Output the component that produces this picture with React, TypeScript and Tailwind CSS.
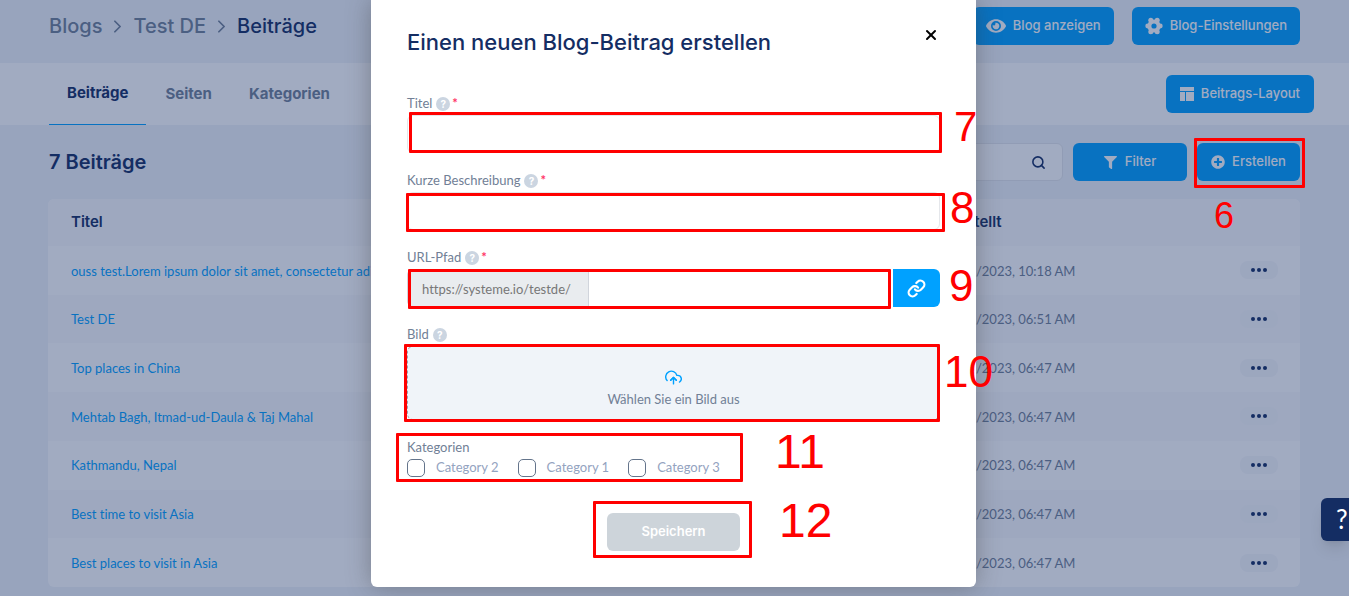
import React from "react";
import { FaEye, FaFilter, FaPlusCircle } from "react-icons/fa";
import { FiSearch, FiUploadCloud } from "react-icons/fi";
import { ChevronRight, Link, X } from "lucide-react";

const posts = [
  { title: "ouss test.Lorem ipsum dolor sit amet, consectetur adipiscing", date: "4/1/2023, 10:18 AM" },
  { title: "Test DE", date: "3/2/2023, 06:51 AM" },
  { title: "Top places in China", date: "3/2/2023, 06:47 AM" },
  { title: "Mehtab Bagh, Itmad-ud-Daula & Taj Mahal", date: "3/2/2023, 06:47 AM" },
  { title: "Kathmandu, Nepal", date: "3/2/2023, 06:47 AM" },
  { title: "Best time to visit Asia", date: "3/2/2023, 06:47 AM" },
  { title: "Best places to visit in Asia", date: "3/2/2023, 06:47 AM" },
];

const categories = ["Category 2", "Category 1", "Category 3"];

// red frames and step numbers, placed from the top left of the dialog
const marks = [
  { box: "left-[38px] top-[112px] w-[533px] h-[41px]", num: "7", pos: "left-[583px] top-[106px] text-[42px]" },
  { box: "left-[35px] top-[193px] w-[539px] h-[39px]", num: "8", pos: "left-[579px] top-[186px] text-[44px]" },
  { box: "left-[37px] top-[269px] w-[483px] h-[40px]", num: "9", pos: "left-[578px] top-[264px] text-[44px]" },
  { box: "left-[33px] top-[344px] w-[536px] h-[78px]", num: "10", pos: "left-[573px] top-[350px] text-[44px]" },
  { box: "left-[25px] top-[433px] w-[347px] h-[49px]", num: "11", pos: "left-[404px] top-[428px] text-[48px]" },
  { box: "left-[222px] top-[501px] w-[159px] h-[57px]", num: "12", pos: "left-[408px] top-[497px] text-[48px]" },
];

const blueButton =
  "flex h-[38px] items-center justify-center rounded-md bg-[#00a1ff] text-[13px] font-medium text-white font-['Inter',sans-serif]";

function GearIcon() {
  return (
    <svg viewBox="0 0 18 18" className="h-[18px] w-[18px]" fill="currentColor">
      <circle cx="9" cy="9" r="4.6" fill="none" stroke="currentColor" strokeWidth="4" />
      <circle cx="2.7" cy="9" r="2.4" />
      <circle cx="15.3" cy="9" r="2.4" />
      <circle cx="5.8" cy="3.3" r="2.5" />
      <circle cx="12.2" cy="3.3" r="2.5" />
      <circle cx="5.8" cy="14.7" r="2.5" />
      <circle cx="12.2" cy="14.7" r="2.5" />
    </svg>
  );
}

function LayoutIcon() {
  return (
    <svg viewBox="0 0 14 14" className="h-3.5 w-3.5" fill="currentColor">
      <path d="M0 0h14v4H0zM0 5h5v9H0zM6 5h8v9H6z" />
    </svg>
  );
}

function Help() {
  return (
    <span className="flex h-3.5 w-3.5 items-center justify-center rounded-full bg-[#cbd5e1] text-[10px] leading-none font-bold text-white font-['Inter',sans-serif]">
      ?
    </span>
  );
}

function Label({ id, text, required }: { id: string; text: string; required?: boolean }) {
  return (
    <div className="flex h-[22px] items-center">
      <label htmlFor={id} className="mr-1">{text}</label>
      <Help />
      {required && <span className="ml-0.5 font-bold text-[#ff3366]">*</span>}
    </div>
  );
}

function Dialog() {
  return (
    <div
      role="dialog"
      aria-labelledby="dialog-title"
      className="relative w-[605px] rounded-b-md bg-white px-9 pb-9 shadow-[0_0_24px_rgba(60,60,60,0.4)]"
    >
      <div className="flex h-[92px] items-start justify-between">
        <h2 id="dialog-title" className="pt-[26px] text-[22px] leading-8 font-medium text-[#142d63] font-['Inter',sans-serif]">
          Einen neuen Blog-Beitrag erstellen
        </h2>
        <button aria-label="Schließen" className="mt-7 flex h-3.5 w-[18px] items-center justify-center text-black">
          <X size={16} strokeWidth={3} />
        </button>
      </div>

      <form className="flex flex-col gap-[17px] pt-px text-[#718096]">
        <div>
          <Label id="titel" text="Titel" required />
          <input id="titel" className="block h-[38px] w-full rounded-md border border-gray-200 px-3" />
        </div>
        <div>
          <Label id="beschreibung" text="Kurze Beschreibung" required />
          <input id="beschreibung" className="block h-[38px] w-full rounded-md border border-gray-200 px-3" />
        </div>
        <div>
          <Label id="pfad" text="URL-Pfad" required />
          <div className="flex h-[38px]">
            <span className="flex w-[182px] items-center rounded-l-md border border-gray-300 bg-[#e9ecef] px-3.5 pt-1 text-[#777]">
              https://systeme.io/testde/
            </span>
            <input id="pfad" className="min-w-0 flex-1 border-y border-gray-200 px-3" />
            <button type="button" aria-label="Link kopieren" className="ml-0.5 flex w-[47px] items-center justify-center rounded-r-md bg-[#00a1ff] text-white">
              <Link size={19} strokeWidth={2.75} />
            </button>
          </div>
        </div>
        <div>
          <Label id="bild" text="Bild" />
          <button
            id="bild"
            type="button"
            className="flex h-[74px] w-full flex-col items-center justify-center gap-1 rounded-md border border-dashed border-gray-400 bg-[#f0f4f9] pt-3"
          >
            <FiUploadCloud size={17} className="text-[#00a1ff]" />
            <span>Wählen Sie ein Bild aus</span>
          </button>
        </div>
        <fieldset>
          <legend className="mb-0.5 h-5 leading-5">Kategorien</legend>
          <div className="flex h-[18px] items-center gap-[19px] text-[#94a3bf]">
            {categories.map((name) => (
              <label key={name} className="flex items-center gap-[11px]">
                <input type="checkbox" className="h-[18px] w-[18px] appearance-none rounded-[5px] border border-[#64748b]" />
                {name}
              </label>
            ))}
          </div>
        </fieldset>
        <button
          type="submit"
          className="mt-[19px] h-[38px] w-[133px] self-center rounded-md bg-[#cdd4da] font-semibold text-white font-['Inter',sans-serif]"
        >
          Speichern
        </button>
      </form>

      {marks.map((m) => (
        <div key={m.num} className="pointer-events-none text-[#ff0000] font-['Liberation_Sans',sans-serif]">
          <div className={`absolute rounded-[1px] border-3 border-[#ff0000] ${m.box}`} />
          <span className={`absolute leading-none ${m.pos}`}>{m.num}</span>
        </div>
      ))}
    </div>
  );
}

export default function App() {
  return (
    <div className="relative min-h-screen overflow-hidden bg-[#f0f4f9] text-[13px] font-['Lato',sans-serif] [font-variant-ligatures:none]">
      <header className="flex h-[63px] items-start justify-between px-[49px] pt-[7px] font-['Inter',sans-serif]">
        <nav className="flex h-[38px] items-center gap-[5px] text-xl font-medium text-[#718096]">
          <a href="#">Blogs</a>
          <ChevronRight size={21} />
          <a href="#">Test DE</a>
          <ChevronRight size={21} />
          <span className="text-[#142d63]">Beiträge</span>
        </nav>
        <div className="flex gap-[18px]">
          <button className={`${blueButton} gap-[7px] px-[13px]`}><FaEye size={20} />Blog anzeigen</button>
          <button className={`${blueButton} gap-[7px] px-[13px]`}><GearIcon />Blog-Einstellungen</button>
        </div>
      </header>

      <div className="flex h-[62px] items-center justify-between bg-white pr-[35px] pl-[49px]">
        <nav className="flex h-full gap-px text-[15px] font-bold text-[#718096] font-['Inter',sans-serif]">
          <a href="#" className="flex items-center border-b border-[#00a1ff] px-[18px] text-[#142d63]">Beiträge</a>
          <a href="#" className="flex items-center px-[18px]">Seiten</a>
          <a href="#" className="flex items-center px-[18px]">Kategorien</a>
        </nav>
        <button className={`${blueButton} gap-[7px] px-3.5`}><LayoutIcon />Beitrags-Layout</button>
      </div>

      <main className="pt-[18px] pr-[49px] pl-12">
        <div className="flex items-center justify-between">
          <h1 className="pl-px text-xl font-semibold text-[#142d63] font-['Inter',sans-serif]">7 Beiträge</h1>
          <div className="flex gap-2.5">
            <div className="flex h-[38px] w-60 items-center rounded-md border border-gray-200 bg-white pr-4">
              <input aria-label="Suche" className="min-w-0 flex-1 px-3" />
              <FiSearch size={15} strokeWidth={2.5} className="text-[#142d63]" />
            </div>
            <button className={`${blueButton} w-[114px] gap-2`}><FaFilter size={13} />Filter</button>
            <button className={`${blueButton} w-[103px] gap-[7px]`}><FaPlusCircle size={14} />Erstellen</button>
          </div>
        </div>

        <div className="mt-[18px] overflow-hidden rounded-md bg-white">
          <table className="h-[388px] w-full table-fixed text-left">
            <thead>
              <tr className="h-[47px] bg-[#fafafc] text-[15px] text-[#142d63] font-['Inter',sans-serif]">
                <th className="pl-[23px] font-semibold">Titel</th>
                <th className="w-[249px] font-semibold">Erstellt</th>
                <th className="w-[100px]"></th>
              </tr>
            </thead>
            <tbody>
              {posts.map((post, i) => (
                <tr key={i} className="even:bg-[#fafafc]">
                  <td className="truncate pt-0.5 pl-[23px]"><a href="#" className="text-[#00a1ff]">{post.title}</a></td>
                  <td className="pt-0.5 pl-1 text-[#718096]">{post.date}</td>
                  <td className="pr-[22px]">
                    <button aria-label="Aktionen" className="ml-auto flex h-[18px] w-[38px] items-center justify-center gap-0.5 rounded-lg bg-[#f7f8fb]">
                      <span className="h-1 w-1 rounded-full bg-[#142d63]" />
                      <span className="h-1 w-1 rounded-full bg-[#142d63]" />
                      <span className="h-1 w-1 rounded-full bg-[#142d63]" />
                    </button>
                  </td>
                </tr>
              ))}
            </tbody>
          </table>
        </div>
      </main>

      <div className="absolute inset-0 flex items-start justify-center bg-[#142d63]/40 pr-0.5">
        <Dialog />
      </div>

      <div className="pointer-events-none absolute top-[138px] right-[44px] h-[50px] w-[111px] rounded-[1px] border-3 border-[#ff0000]" />
      <span className="absolute top-[198px] right-[115px] text-[36px] leading-none text-[#ff0000] font-['Liberation_Sans',sans-serif]">6</span>

      <button className="absolute top-[498px] right-0 h-[43px] w-7 rounded-l-md bg-[#142d63] pl-[15px] text-left text-[26px] text-white shadow-lg">
        ?
      </button>
    </div>
  );
}
